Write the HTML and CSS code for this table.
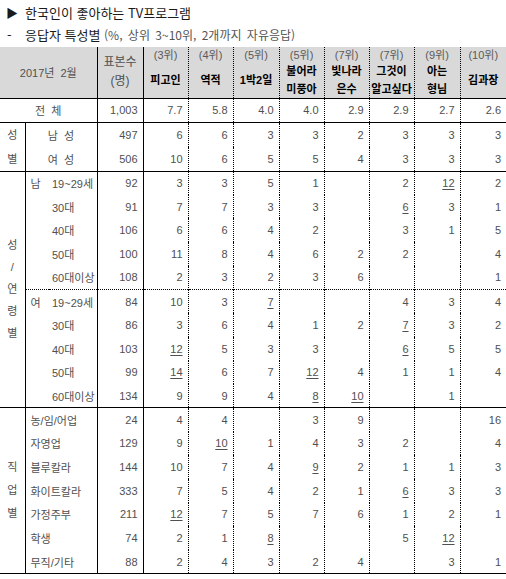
FILE: index.html
```html
<!DOCTYPE html>
<html lang="ko">
<head>
<meta charset="utf-8">
<link rel="stylesheet" href="styles.css">
</head>
<body>
<div class="page">
  <div class="title"><span class="tri">▶</span>한국인이 좋아하는 TV프로그램</div>
  <div class="subtitle"><span class="dash">-</span>응답자 특성별 <span class="note">(%, 상위 3~10위, 2개까지 자유응답)</span></div>
  <table class="tbl">
    <colgroup>
      <col class="w25"><col class="w24"><col class="w48"><col class="w46">
      <col class="w45"><col class="w45"><col class="w46"><col class="w45"><col class="w45"><col class="w45"><col class="w46"><col class="w46">
    </colgroup>
    <thead>
      <tr class="hrow">
        <th colspan="3" class="hl">2017년&nbsp;&nbsp;2월</th>
        <th class="hn">표본수<br>(명)</th>
        <th class="h first"><div class="rk">(3위)</div><div class="nm">피고인</div></th>
        <th class="h"><div class="rk">(4위)</div><div class="nm">역적</div></th>
        <th class="h"><div class="rk">(5위)</div><div class="nm">1박2일</div></th>
        <th class="h"><div class="rk">(5위)</div><div class="nm">불어라<br>미풍아</div></th>
        <th class="h"><div class="rk">(7위)</div><div class="nm">빛나라<br>은수</div></th>
        <th class="h"><div class="rk">(7위)</div><div class="nm">그것이<br>알고싶다</div></th>
        <th class="h"><div class="rk">(9위)</div><div class="nm">아는<br>형님</div></th>
        <th class="h"><div class="rk">(10위)</div><div class="nm">김과장</div></th>
      </tr>
    </thead>
    <tbody>
      <tr class="r-total sep">
        <td colspan="3" class="lc">전&nbsp;&nbsp;체</td>
        <td class="n">1,003</td><td class="d">7.7</td><td class="d">5.8</td><td class="d">4.0</td><td class="d">4.0</td><td class="d">2.9</td><td class="d">2.9</td><td class="d">2.7</td><td class="d">2.6</td>
      </tr>
      <tr class="r-sex sep">
        <td rowspan="2" class="cat cat-sex">성<br>별</td>
        <td colspan="2" class="lc">남&nbsp;&nbsp;성</td>
        <td class="n">497</td><td class="d">6</td><td class="d">6</td><td class="d">3</td><td class="d">3</td><td class="d">2</td><td class="d">3</td><td class="d">3</td><td class="d">3</td>
      </tr>
      <tr class="r-sex">
        <td colspan="2" class="lc">여&nbsp;&nbsp;성</td>
        <td class="n">506</td><td class="d">10</td><td class="d">6</td><td class="d">5</td><td class="d">5</td><td class="d">4</td><td class="d">3</td><td class="d">3</td><td class="d">3</td>
      </tr>

      <tr class="r sep">
        <td rowspan="10" class="cat cat-age">성<br>/<br>연<br>령<br>별</td>
        <td class="sx">남</td><td class="ag">19~29세</td>
        <td class="n">92</td><td class="d">3</td><td class="d">3</td><td class="d">5</td><td class="d">1</td><td class="d"></td><td class="d">2</td><td class="d"><u>12</u></td><td class="d">2</td>
      </tr>
      <tr class="r">
        <td class="sx"></td><td class="ag">30대</td>
        <td class="n">91</td><td class="d">7</td><td class="d">7</td><td class="d">3</td><td class="d">3</td><td class="d"></td><td class="d"><u>6</u></td><td class="d">3</td><td class="d">1</td>
      </tr>
      <tr class="r">
        <td class="sx"></td><td class="ag">40대</td>
        <td class="n">106</td><td class="d">6</td><td class="d">6</td><td class="d">4</td><td class="d">2</td><td class="d"></td><td class="d">3</td><td class="d">1</td><td class="d">5</td>
      </tr>
      <tr class="r">
        <td class="sx"></td><td class="ag">50대</td>
        <td class="n">100</td><td class="d">11</td><td class="d">8</td><td class="d">4</td><td class="d">6</td><td class="d">2</td><td class="d">2</td><td class="d"></td><td class="d">4</td>
      </tr>
      <tr class="r">
        <td class="sx"></td><td class="ag">60대이상</td>
        <td class="n">108</td><td class="d">2</td><td class="d">3</td><td class="d">2</td><td class="d">3</td><td class="d">6</td><td class="d"></td><td class="d"></td><td class="d">1</td>
      </tr>
      <tr class="r dot">
        <td class="sx">여</td><td class="ag">19~29세</td>
        <td class="n">84</td><td class="d">10</td><td class="d">3</td><td class="d"><u>7</u></td><td class="d"></td><td class="d"></td><td class="d">4</td><td class="d">3</td><td class="d">4</td>
      </tr>
      <tr class="r">
        <td class="sx"></td><td class="ag">30대</td>
        <td class="n">86</td><td class="d">3</td><td class="d">6</td><td class="d">4</td><td class="d">1</td><td class="d">2</td><td class="d"><u>7</u></td><td class="d">3</td><td class="d">2</td>
      </tr>
      <tr class="r">
        <td class="sx"></td><td class="ag">40대</td>
        <td class="n">103</td><td class="d"><u>12</u></td><td class="d">5</td><td class="d">3</td><td class="d">3</td><td class="d"></td><td class="d"><u>6</u></td><td class="d">5</td><td class="d">5</td>
      </tr>
      <tr class="r">
        <td class="sx"></td><td class="ag">50대</td>
        <td class="n">99</td><td class="d"><u>14</u></td><td class="d">6</td><td class="d">7</td><td class="d"><u>12</u></td><td class="d">4</td><td class="d">1</td><td class="d">1</td><td class="d">4</td>
      </tr>
      <tr class="r">
        <td class="sx"></td><td class="ag">60대이상</td>
        <td class="n">134</td><td class="d">9</td><td class="d">9</td><td class="d">4</td><td class="d"><u>8</u></td><td class="d"><u>10</u></td><td class="d"></td><td class="d">1</td><td class="d"></td>
      </tr>

      <tr class="r sep">
        <td rowspan="7" class="cat cat-job">직<br>업<br>별</td>
        <td colspan="2" class="jb">농/임/어업</td>
        <td class="n">24</td><td class="d">4</td><td class="d">4</td><td class="d"></td><td class="d">3</td><td class="d">9</td><td class="d"></td><td class="d"></td><td class="d">16</td>
      </tr>
      <tr class="r">
        <td colspan="2" class="jb">자영업</td>
        <td class="n">129</td><td class="d">9</td><td class="d"><u>10</u></td><td class="d">1</td><td class="d">4</td><td class="d">3</td><td class="d">2</td><td class="d"></td><td class="d">4</td>
      </tr>
      <tr class="r">
        <td colspan="2" class="jb">블루칼라</td>
        <td class="n">144</td><td class="d">10</td><td class="d">7</td><td class="d">4</td><td class="d"><u>9</u></td><td class="d">2</td><td class="d">1</td><td class="d">1</td><td class="d">3</td>
      </tr>
      <tr class="r">
        <td colspan="2" class="jb">화이트칼라</td>
        <td class="n">333</td><td class="d">7</td><td class="d">5</td><td class="d">4</td><td class="d">2</td><td class="d">1</td><td class="d"><u>6</u></td><td class="d">3</td><td class="d">3</td>
      </tr>
      <tr class="r">
        <td colspan="2" class="jb">가정주부</td>
        <td class="n">211</td><td class="d"><u>12</u></td><td class="d">7</td><td class="d">5</td><td class="d">7</td><td class="d">6</td><td class="d">1</td><td class="d">2</td><td class="d">1</td>
      </tr>
      <tr class="r">
        <td colspan="2" class="jb">학생</td>
        <td class="n">74</td><td class="d">2</td><td class="d">1</td><td class="d"><u>8</u></td><td class="d"></td><td class="d"></td><td class="d">5</td><td class="d"><u>12</u></td><td class="d"></td>
      </tr>
      <tr class="r last">
        <td colspan="2" class="jb">무직/기타</td>
        <td class="n">88</td><td class="d">2</td><td class="d">4</td><td class="d">3</td><td class="d">2</td><td class="d">4</td><td class="d"></td><td class="d">3</td><td class="d">1</td>
      </tr>
    </tbody>
  </table>
</div>
</body>
</html>
```

FILE: styles.css
```css
html, body {
  margin: 0;
  padding: 0;
  background: #ffffff;
}

.page {
  width: 506px;
  font-family: "Liberation Sans", "Noto Sans CJK KR", sans-serif;
  color: #505050;
}

.title {
  height: 24px;
  padding: 3px 0 0 6px;
  box-sizing: border-box;
  font-family: "Noto Sans CJK KR", sans-serif;
  font-size: 13px;
  line-height: 20px;
  color: #1a1a1a;
}

.tri {
  display: inline-block;
  width: 19px;
  font-size: 12px;
}

.subtitle {
  height: 23px;
  padding: 1px 0 0 7px;
  box-sizing: border-box;
  font-family: "Noto Sans CJK KR", sans-serif;
  font-size: 13px;
  line-height: 20px;
  color: #1a1a1a;
}

.dash {
  display: inline-block;
  width: 18px;
}

.note {
  font-size: 12px;
  color: #555;
  word-spacing: 2px;
}

.tbl {
  border-collapse: collapse;
  table-layout: fixed;
  width: 506px;
  font-size: 11px;
}

.w25 { width: 25px; }
.w24 { width: 24px; }
.w48 { width: 48px; }
.w46 { width: 46px; }
.w45 { width: 45px; }

.tbl th {
  background: #d9d9d9;
  font-weight: normal;
  padding: 0;
  color: #505050;
  border-bottom: 1px solid #000;
  font-family: "Liberation Sans", "Noto Sans CJK KR", sans-serif;
}

.hrow {
  height: 51px;
}

.hl {
  text-align: center;
  border-right: 1px solid #000;
  font-size: 11px;
}

.hn {
  text-align: center;
  line-height: 19px;
  border-right: 1px solid #000;
  font-size: 12px;
  color: #555;
}

.h {
  vertical-align: top;
  border-left: 1px dotted #000;
  text-align: center;
}

.h.first {
  border-left: 1px solid #000;
}

.rk {
  height: 16px;
  line-height: 17px;
  font-size: 11px;
  color: #5a5a5a;
}

.nm {
  height: 34px;
  display: flex;
  align-items: center;
  justify-content: center;
  line-height: 18px;
  font-weight: bold;
  color: #000;
  font-size: 11px;
  white-space: nowrap;
}

.tbl td {
  padding: 0 5px 0 0;
  text-align: right;
  color: #505050;
  white-space: nowrap;
}

.r-total { height: 24px; }
.r-sex { height: 24.5px; }
.r { height: 23.7px; }

.sep td { border-top: 1px solid #000; }
.dot td { border-top: 1px dotted #000; }
.last td { border-bottom: 1px solid #000; }

.lc {
  text-align: center !important;
  padding: 0 !important;
  border-right: 1px solid #000;
}

.cat {
  text-align: center !important;
  padding: 0 !important;
  border-right: 1px solid #000;
  border-bottom: 1px solid #000;
}

.cat-sex { line-height: 24px; }
.cat-age { line-height: 22px; }
.cat-job { line-height: 23px; }

.sx {
  text-align: left !important;
  padding: 0 0 0 5px !important;
}

.ag {
  text-align: left !important;
  padding: 0 0 0 3px !important;
  border-right: 1px solid #000;
}

.jb {
  text-align: left !important;
  padding: 0 0 0 5px !important;
  border-right: 1px solid #000;
}

.n {
  border-right: 1px solid #000;
}

.d {
  border-left: 1px dotted #000;
}

u {
  text-underline-offset: 2px;
}
```
